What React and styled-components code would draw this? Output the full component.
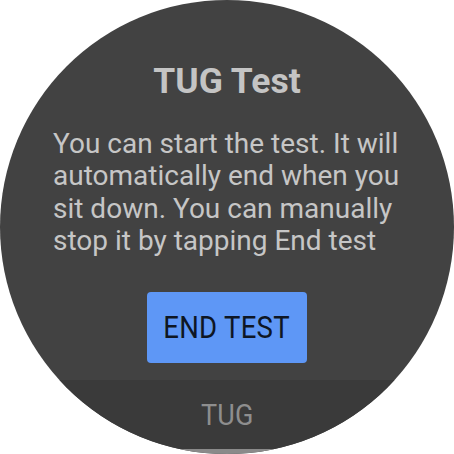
import React from "react";
import styled, { createGlobalStyle } from "styled-components";

const Global = createGlobalStyle`
  html, body { margin: 0; padding: 0; background: #ffffff; }
  body { font-family: Roboto, "Noto Sans", sans-serif; }
`;

const Watch = styled.div`
  width: 454px;
  height: 454px;
  border-radius: 50%;
  overflow: hidden;
  background: #424242;
  display: flex;
  flex-direction: column;
`;

const Content = styled.main`
  flex: 1;
  display: flex;
  flex-direction: column;
  align-items: center;
  padding: 61px 0 0;
`;

const Title = styled.h1`
  margin: 0;
  font-family: Roboto, sans-serif;
  font-weight: 700;
  font-size: 35.5px;
  line-height: 40px;
  color: #c4c4c4;
`;

const Body = styled.p`
  margin: 26.5px 0 0;
  width: 350px;
  padding-left: 2px;
  font-family: Roboto, sans-serif;
  font-weight: 400;
  font-size: 28px;
  line-height: 32.5px;
  color: #c6c6c6;
  text-align: left;
`;

const Button = styled.button`
  margin-top: 34px;
  width: 160px;
  height: 71px;
  border: none;
  border-radius: 4px;
  background: #5e97f6;
  display: flex;
  align-items: center;
  justify-content: center;
  padding: 0;
  cursor: pointer;
`;

const Condensed = styled.span`
  display: inline-block;
  font-family: Roboto, sans-serif;
  font-weight: 400;
  font-size: ${(p) => p.$size}px;
  color: ${(p) => p.$color};
  transform: scaleX(${(p) => p.$scale});
  white-space: nowrap;
  letter-spacing: 0.3px;
`;

const Footer = styled.footer`
  height: 69px;
  background: #3a3a3a;
  display: flex;
  align-items: center;
  justify-content: center;
`;

const Indicator = styled.div`
  height: 5px;
  background: #8a8a8a;
`;

export default function App() {
  return (
    <>
      <Global />
      <Watch>
        <Content>
          <Title>TUG Test</Title>
          <Body>
            You can start the test. It will automatically end when you sit
            down. You can manually stop it by tapping End test
          </Body>
          <Button>
            <Condensed $size={32} $scale={0.86} $color="#0e1624">END TEST</Condensed>
          </Button>
        </Content>
        <Footer>
          <Condensed $size={30} $scale={0.9} $color="#8e8e8e">TUG</Condensed>
        </Footer>
        <Indicator />
      </Watch>
    </>
  );
}
